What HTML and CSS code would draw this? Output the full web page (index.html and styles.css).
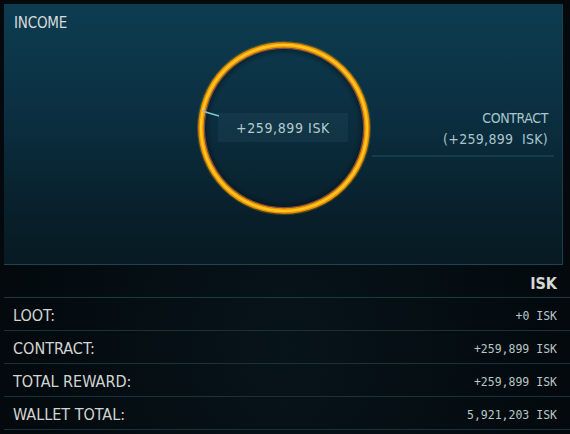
FILE: index.html
```html
<!DOCTYPE html>
<html>
<head>
<meta charset="utf-8">
<link rel="stylesheet" href="styles.css">
</head>
<body>
<div class="frame">
  <section class="panel">
    <svg class="diagram" width="559" height="260" viewBox="0 0 559 260">
      <defs>
        <radialGradient id="glow" cx="0.5" cy="0.5" r="0.5">
          <stop offset="0.9" stop-color="#0a1f29" stop-opacity="0"/>
          <stop offset="1" stop-color="#02090d" stop-opacity="0.5"/>
        </radialGradient>
      </defs>
      <circle cx="280" cy="124" r="80" fill="url(#glow)"/>
      <circle cx="280" cy="124" r="83" fill="none" stroke="#f0b000" stroke-opacity="0.25" stroke-width="8"/>
      <circle cx="280" cy="124" r="83" fill="none" stroke="#ec8f00" stroke-width="5.5"/>
      <circle cx="280" cy="124" r="83" fill="none" stroke="#ffc41e" stroke-width="2.5"/>
      <circle cx="280" cy="124" r="79.6" fill="none" stroke="#a0506a" stroke-width="1" stroke-opacity="0.6"/>
      <line x1="198" y1="107" x2="215" y2="112" stroke="#7fc6cf" stroke-width="1.5"/>
      <line x1="368" y1="152" x2="550" y2="152" stroke="#25505c" stroke-width="1"/>
    </svg>
    <h1 class="title">INCOME</h1>
    <div class="center-label">+259,899 ISK</div>
    <div class="side-label">
      <div class="side-name">CONTRACT</div>
      <div>(+259,899&nbsp; ISK)</div>
    </div>
  </section>
  <section class="table">
    <div class="row head"><span></span><span class="unit">ISK</span></div>
    <div class="row"><span class="label">LOOT:</span><span class="val">+0 ISK</span></div>
    <div class="row"><span class="label">CONTRACT:</span><span class="val">+259,899 ISK</span></div>
    <div class="row"><span class="label">TOTAL REWARD:</span><span class="val">+259,899 ISK</span></div>
    <div class="row"><span class="label">WALLET TOTAL:</span><span class="val">5,921,203 ISK</span></div>
  </section>
</div>
</body>
</html>
```
FILE: styles.css
```css
* { box-sizing: border-box; margin: 0; padding: 0; }
html, body {
  width: 570px;
  height: 434px;
  overflow: hidden;
  background: #03090d;
}
body {
  font-family: "DejaVu Sans Condensed", "Liberation Sans Narrow", "Liberation Sans", sans-serif;
  color: #d4d8d6;
}
.frame {
  display: flex;
  flex-direction: column;
  padding: 4px 0 0 4px;
  height: 434px;
  background: radial-gradient(ellipse at 50% 80%, #07141a 0%, #03090d 70%);
}
.panel {
  position: relative;
  height: 261px;
  margin-right: 7px;
  background: linear-gradient(180deg, #0d3c50 0%, #0b3042 40%, #08202b 80%, #071a22 100%);
  border-right: 1px solid #1c3f4b;
  border-bottom: 1px solid #1f4550;
}
.diagram {
  position: absolute;
  left: 0;
  top: 0;
}
.title {
  position: relative;
  font-size: 15px;
  font-weight: normal;
  letter-spacing: -0.2px;
  padding: 10px 0 0 10px;
  color: #d8dcdc;
}
.center-label {
  position: absolute;
  left: 214px;
  top: 109px;
  width: 130px;
  height: 29px;
  display: flex;
  align-items: center;
  justify-content: center;
  background: rgba(120, 170, 180, 0.08);
  font-size: 14px;
  letter-spacing: 0.6px;
  color: #b4ccd0;
}
.side-label {
  position: absolute;
  right: 14px;
  top: 104px;
  text-align: right;
  font-size: 14px;
  line-height: 21px;
  letter-spacing: 0.3px;
  color: #a8c6cc;
}
.side-name { letter-spacing: -0.4px; }
.table {
  display: flex;
  flex-direction: column;
}
.row {
  display: flex;
  justify-content: space-between;
  align-items: center;
  height: 33px;
  padding: 3px 13px 0 9px;
  border-bottom: 1px solid #17323a;
}
.head { border-bottom-color: #1b3a42; padding-top: 2px; }
.unit {
  font-size: 16px;
  font-weight: bold;
  color: #d6d8d2;
  padding-top: 2px;
}
.label {
  font-size: 16px;
  letter-spacing: 0;
  color: #d2d6d2;
}
.val {
  font-family: "DejaVu Sans Mono", "Liberation Mono", monospace;
  font-size: 11.5px;
  color: #b8c6c8;
}
```
